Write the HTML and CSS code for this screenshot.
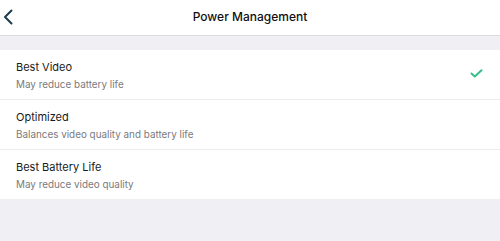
FILE: index.html
```html
<!DOCTYPE html>
<html>
<head>
<meta charset="utf-8">
<link rel="stylesheet" href="styles.css">
</head>
<body>
<div class="page">
  <header class="nav">
    <button class="back" aria-label="Back">
      <svg width="10" height="16" viewBox="0 0 10 16"><path d="M8.5 1.5 L2 8 L8.5 14.5" fill="none" stroke="#1d3b4c" stroke-width="2" stroke-linecap="round" stroke-linejoin="round"/></svg>
    </button>
    <div class="title">Power Management</div>
  </header>
  <div class="gap"></div>
  <ul class="list">
    <li class="row">
      <div class="text">
        <div class="label">Best Video</div>
        <div class="sub">May reduce battery life</div>
      </div>
      <svg class="check" width="13" height="9" viewBox="0 0 13 9"><path d="M1.5 4.5 L4.8 7.5 L11.5 1.3" fill="none" stroke="#35bf8b" stroke-width="2" stroke-linecap="round" stroke-linejoin="round"/></svg>
    </li>
    <li class="row">
      <div class="text">
        <div class="label">Optimized</div>
        <div class="sub">Balances video quality and battery life</div>
      </div>
    </li>
    <li class="row">
      <div class="text">
        <div class="label">Best Battery Life</div>
        <div class="sub">May reduce video quality</div>
      </div>
    </li>
  </ul>
</div>
</body>
</html>
```
FILE: styles.css
```css
html, body {
  margin: 0;
  padding: 0;
}
body {
  background: #f0f0f4;
  font-family: "Inter", "Liberation Sans", sans-serif;
  width: 500px;
  height: 241px;
  overflow: hidden;
}
.nav {
  height: 35px;
  background: #fff;
  border-bottom: 1px solid #dcdce0;
  display: flex;
  align-items: center;
  justify-content: center;
  position: relative;
}
.back {
  position: absolute;
  left: 3px;
  top: 9px;
  border: 0;
  background: none;
  padding: 0;
  width: 12px;
  height: 16px;
  display: flex;
}
.title {
  font-size: 12px;
  font-weight: 500;
  color: #111;
  margin-top: -2px;
}
.gap {
  height: 14px;
}
.list {
  list-style: none;
  margin: 0;
  padding: 0;
  background: #fff;
}
.row {
  height: 49px;
  border-bottom: 1px solid #ececee;
  display: flex;
  align-items: center;
  padding: 0 17px 0 16px;
}
.row:last-child {
  border-bottom: 0;
  height: 49px;
}
.text {
  flex: 1;
  display: flex;
  flex-direction: column;
  gap: 4px;
  padding-top: 1px;
}
.label {
  font-size: 11px;
  color: #1a1a1a;
  line-height: 13px;
}
.sub {
  font-size: 9.9px;
  color: #7a7a7e;
  line-height: 12px;
}
.check {
  margin-top: -2px;
}
```
